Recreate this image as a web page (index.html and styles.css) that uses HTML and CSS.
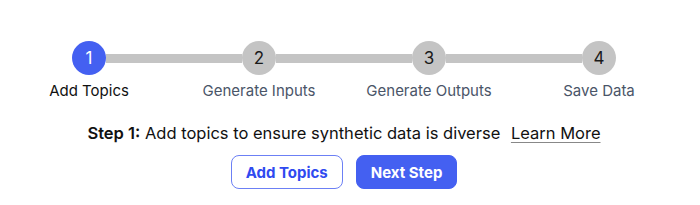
FILE: index.html
```html
<!DOCTYPE html>
<html lang="en">
<head>
    <meta charset="UTF-8">
    <title>Synthetic Data Steps</title>
    <link rel="stylesheet" href="styles.css">
</head>
<body>
    <div class="wizard">
        <!-- Progress steps -->
        <ul class="steps">
            <li class="step done">
                <div class="track">
                    <span class="bar hidden"></span>
                    <span class="dot">1</span>
                    <span class="bar"></span>
                </div>
                <span class="label">Add Topics</span>
            </li>
            <li class="step">
                <div class="track">
                    <span class="bar"></span>
                    <span class="dot">2</span>
                    <span class="bar"></span>
                </div>
                <span class="label">Generate Inputs</span>
            </li>
            <li class="step">
                <div class="track">
                    <span class="bar"></span>
                    <span class="dot">3</span>
                    <span class="bar"></span>
                </div>
                <span class="label">Generate Outputs</span>
            </li>
            <li class="step">
                <div class="track">
                    <span class="bar"></span>
                    <span class="dot">4</span>
                    <span class="bar hidden"></span>
                </div>
                <span class="label">Save Data</span>
            </li>
        </ul>

        <p class="hint"><strong>Step 1:</strong> Add topics to ensure synthetic data is diverse <a href="#" class="learn">Learn More</a></p>

        <div class="actions">
            <button class="btn btn-outline">Add Topics</button>
            <button class="btn btn-primary">Next Step</button>
        </div>
    </div>
</body>
</html>
```

FILE: styles.css
```css
/* General */
body {
    margin: 0;
    background-color: #fff;
    font-family: 'Inter', 'Noto Sans', sans-serif;
    color: #111;
}

.wizard {
    width: 680px;
    margin-left: 4px;
    padding-top: 41px;
}

/* Steps */
.steps {
    list-style: none;
    margin: 0;
    padding: 0;
    display: grid;
    grid-template-columns: repeat(4, 170px);
}

.step {
    display: flex;
    flex-direction: column;
    align-items: center;
}

.track {
    display: flex;
    align-items: center;
    width: 100%;
}

.bar {
    flex: 1;
    height: 9px;
    background-color: #c4c4c4;
}

.bar.hidden {
    background-color: transparent;
}

.dot {
    width: 34px;
    height: 34px;
    border-radius: 50%;
    background-color: #c4c4c4;
    color: #1a1a1a;
    font-size: 17px;
    display: flex;
    align-items: center;
    justify-content: center;
}

.step.done .dot {
    background-color: #4460f1;
    color: #fff;
}

.label {
    margin-top: 6px;
    font-size: 15px;
    line-height: 20px;
    color: #4a5568;
}

.step.done .label {
    color: #111;
}

/* Hint line */
.hint {
    margin: 20px 0 0;
    text-align: center;
    font-size: 16.5px;
    line-height: 24px;
}

.hint strong {
    font-weight: 600;
}

.learn {
    margin-left: 6px;
    color: #111;
    text-decoration: underline;
    text-decoration-color: #888;
    text-decoration-thickness: 1px;
    text-underline-offset: 3px;
}

/* Buttons */
.actions {
    display: flex;
    justify-content: center;
    gap: 13px;
    margin-top: 10px;
}

.btn {
    height: 34px;
    padding: 0 14px;
    border-radius: 8px;
    font-family: 'Inter', sans-serif;
    font-size: 15px;
    font-weight: 700;
    cursor: pointer;
}

.btn-outline {
    background-color: #fff;
    color: #2f4af0;
    border: 1px solid #6c80f5;
}

.btn-primary {
    background-color: #4460f1;
    color: #fff;
    border: 1px solid #4460f1;
}
```
